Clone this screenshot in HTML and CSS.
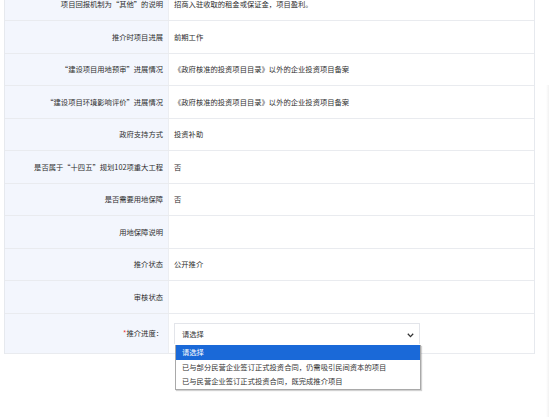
FILE: index.html
```html
<!DOCTYPE html>
<html lang="zh-CN">
<head>
<meta charset="utf-8">
<title>项目详情</title>
<link rel="stylesheet" href="styles.css">
</head>
<body>
<div class="page">
  <div class="table">
    <div class="row"><div class="label">项目回报机制为“其他”的说明</div><div class="value">招商入驻收取的租金或保证金，项目盈利。</div></div>
    <div class="row"><div class="label">推介时项目进展</div><div class="value">前期工作</div></div>
    <div class="row"><div class="label">“建设项目用地预审”进展情况</div><div class="value">《政府核准的投资项目目录》以外的企业投资项目备案</div></div>
    <div class="row"><div class="label">“建设项目环境影响评价”进展情况</div><div class="value">《政府核准的投资项目目录》以外的企业投资项目备案</div></div>
    <div class="row"><div class="label">政府支持方式</div><div class="value">投资补助</div></div>
    <div class="row"><div class="label">是否属于“十四五”规划102项重大工程</div><div class="value">否</div></div>
    <div class="row"><div class="label">是否需要用地保障</div><div class="value">否</div></div>
    <div class="row"><div class="label">用地保障说明</div><div class="value"></div></div>
    <div class="row"><div class="label">推介状态</div><div class="value">公开推介</div></div>
    <div class="row"><div class="label">审核状态</div><div class="value"></div></div>
    <div class="row row-last">
      <div class="label"><span class="req">*</span>推介进度：</div>
      <div class="value">
        <div class="select">
          <span>请选择</span>
          <svg class="arrow" width="7" height="5" viewBox="0 0 7 5"><path d="M0.8 0.8 L3.5 3.6 L6.2 0.8" fill="none" stroke="#333" stroke-width="1.3"/></svg>
          <ul class="options">
            <li class="on">请选择</li>
            <li>已与部分民营企业签订正式投资合同，仍需吸引民间资本的项目</li>
            <li>已与民营企业签订正式投资合同，既完成推介项目</li>
          </ul>
        </div>
      </div>
    </div>
  </div>
  <div class="side"></div>
</div>
</body>
</html>
```

FILE: styles.css
```css
html, body {
  margin: 0;
  padding: 0;
  background: #fff;
  overflow: hidden;
}
body {
  font-family: "Noto Sans CJK SC", "Noto Sans", sans-serif;
  font-size: 7.3px;
  color: #2e2e2e;
}
.page {
  display: flex;
  width: 549px;
  height: 417px;
  overflow: hidden;
}
.table {
  margin-left: 4px;
  margin-top: -11.5px;
  width: 531px;
  align-self: flex-start;
  border-left: 1px solid #e6e9ee;
  border-right: 1px solid #e6e9ee;
  box-sizing: border-box;
}
.row {
  display: grid;
  grid-template-columns: 164px 1fr;
  height: 32.5px;
  border-bottom: 1px solid #e9ebef;
  box-sizing: border-box;
}
.label {
  background: #f3f6fd;
  display: flex;
  align-items: center;
  justify-content: flex-end;
  padding-right: 5px;
  border-right: 1px solid #eceef2;
  white-space: nowrap;
}
.value {
  display: flex;
  align-items: center;
  padding-left: 5px;
  white-space: nowrap;
}
.row-last {
  height: 40px;
}
.row-last .value {
  align-items: flex-start;
  padding-top: 9.5px;
}
.row-last .label {
  padding-right: 5px;
}
.req {
  color: #e33;
}
.select {
  position: relative;
  width: 246px;
  height: 21px;
  box-sizing: border-box;
  border: 1px solid #e3e5ea;
  border-bottom: none;
  background: #fff;
  display: flex;
  align-items: center;
  padding-left: 7px;
  color: #333;
}
.arrow {
  position: absolute;
  right: 5px;
  top: 8.5px;
}
.options {
  position: absolute;
  left: 0;
  top: 21px;
  width: 246px;
  margin: 0;
  padding: 0;
  list-style: none;
  box-sizing: border-box;
  background: #fff;
  border: 1px solid #a9a9a9;
  border-top: none;
  box-shadow: 1px 1px 1px rgba(0,0,0,0.18);
  z-index: 2;
}
.options li {
  height: 14.5px;
  line-height: 14.5px;
  padding-left: 6px;
  color: #333;
}
.options li.on {
  background: #1a69d8;
  color: #fff;
}
.side {
  flex: 1;
  position: relative;
}
.side::after {
  content: "";
  position: absolute;
  right: 0;
  top: 85px;
  bottom: 0;
  width: 3px;
  background: linear-gradient(to right, rgba(0,0,0,0), rgba(0,0,0,0.05));
}
```
